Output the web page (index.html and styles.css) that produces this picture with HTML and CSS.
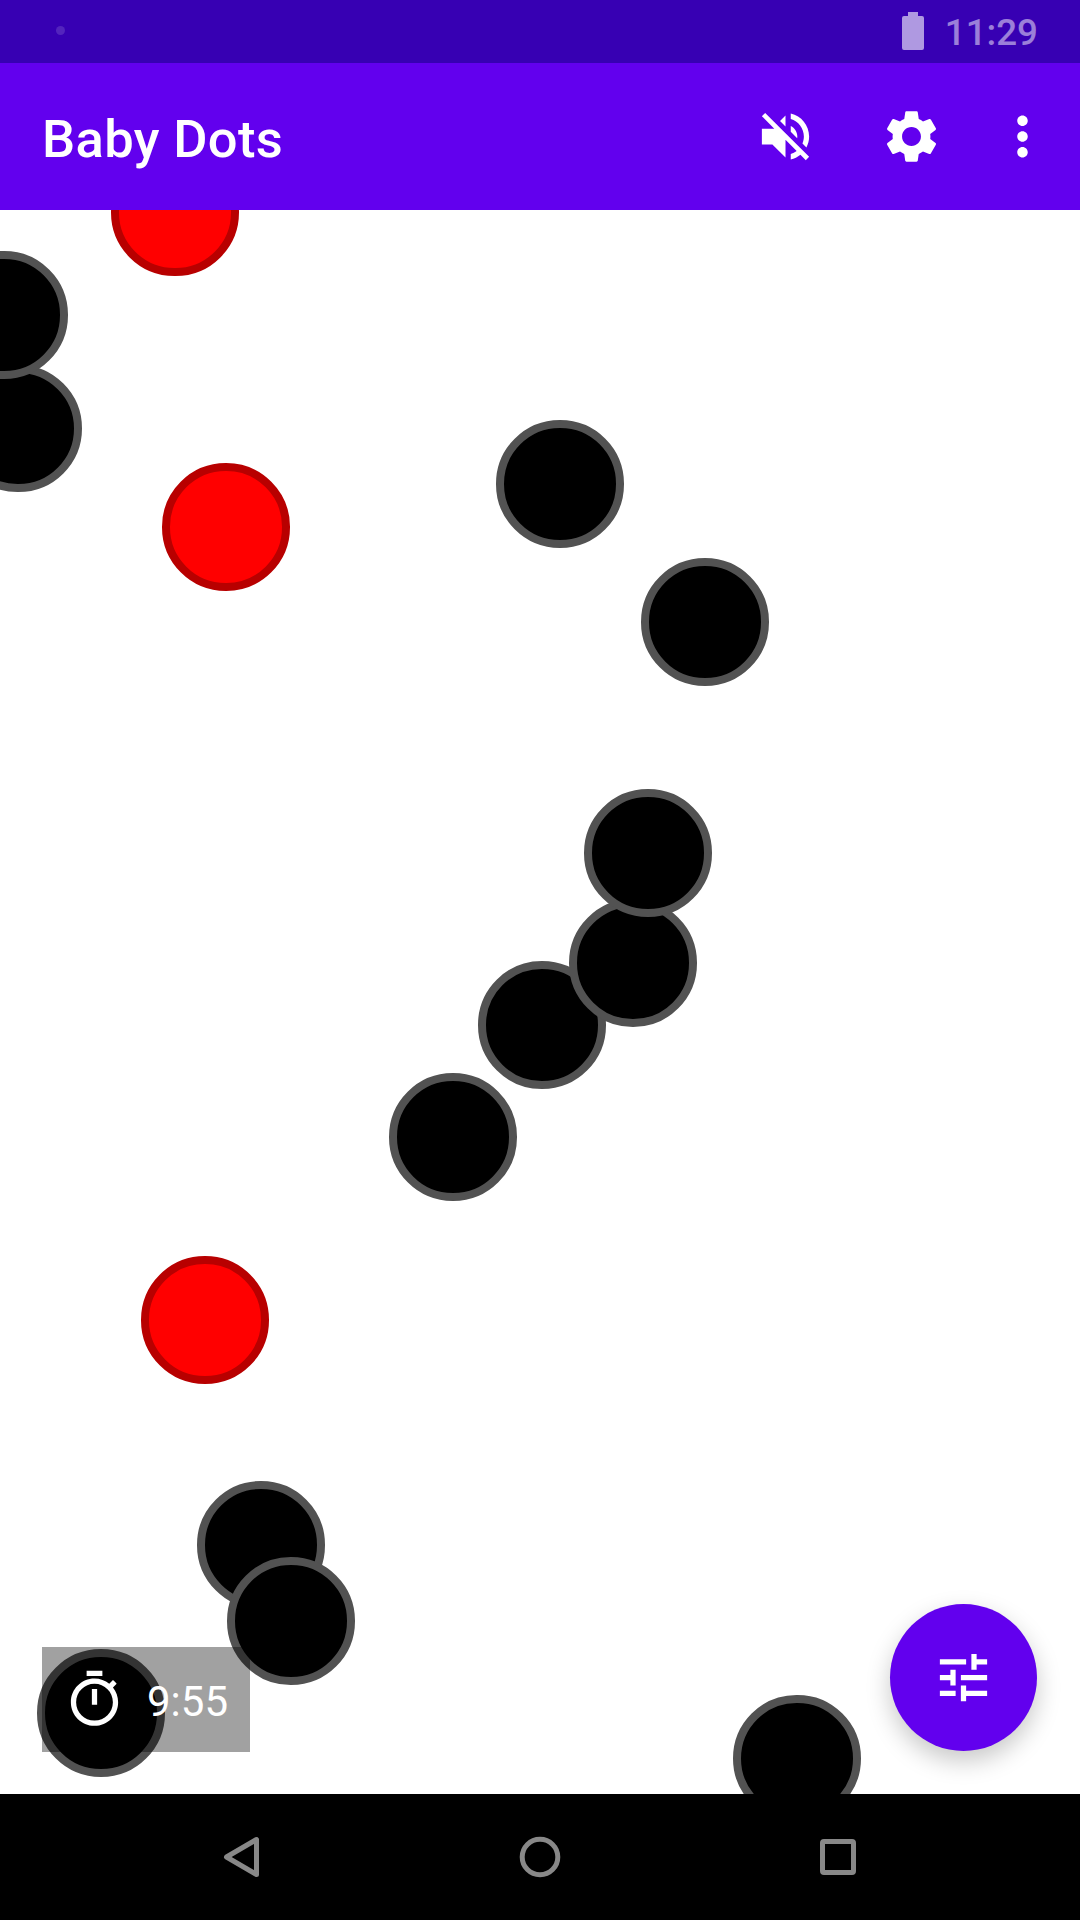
FILE: index.html
```html
<!DOCTYPE html>
<html lang="en">
<head>
<meta charset="utf-8">
<title>Baby Dots</title>
<link rel="stylesheet" href="styles.css">
</head>
<body>
<div class="screen">
  <div class="status-bar">
    <span class="notif-dot"></span>
    <div class="status-right">
      <svg class="battery" viewBox="0 0 22 38"><path d="M6 0h10v4h4a2 2 0 0 1 2 2v30a2 2 0 0 1-2 2H2a2 2 0 0 1-2-2V6a2 2 0 0 1 2-2h4z"/></svg>
      <span class="clock">11:29</span>
    </div>
  </div>
  <header class="app-bar">
    <h1 class="title">Baby Dots</h1>
    <div class="actions">
      <button class="action"><svg class="icon" viewBox="0 0 24 24"><path d="M16.5 12c0-1.77-1.02-3.29-2.5-4.03v2.21l2.45 2.45c.03-.2.05-.41.05-.63zm2.5 0c0 .94-.2 1.82-.54 2.64l1.51 1.51C20.63 14.91 21 13.5 21 12c0-4.28-2.99-7.86-7-8.77v2.06c2.89.86 5 3.54 5 6.71zM4.27 3L3 4.27 7.73 9H3v6h4l5 5v-6.73l4.25 4.25c-.67.52-1.42.93-2.25 1.18v2.06c1.38-.31 2.63-.95 3.69-1.81L19.73 21 21 19.73l-9-9L4.27 3zM12 4L9.91 6.09 12 8.18V4z"/></svg></button>
      <button class="action"><svg class="icon" viewBox="0 0 24 24"><path d="M19.14 12.94c.04-.3.06-.61.06-.94 0-.32-.02-.64-.07-.94l2.03-1.58c.18-.14.23-.41.12-.61l-1.92-3.32c-.12-.22-.37-.29-.59-.22l-2.39.96c-.5-.38-1.03-.7-1.62-.94l-.36-2.54c-.04-.24-.24-.41-.48-.41h-3.84c-.24 0-.43.17-.47.41l-.36 2.54c-.59.24-1.13.57-1.62.94l-2.39-.96c-.22-.08-.47 0-.59.22L2.74 8.87c-.12.21-.08.47.12.61l2.03 1.58c-.05.3-.09.63-.09.94s.02.64.07.94l-2.03 1.58c-.18.14-.23.41-.12.61l1.92 3.32c.12.22.37.29.59.22l2.39-.96c.5.38 1.03.7 1.62.94l.36 2.54c.05.24.24.41.48.41h3.84c.24 0 .44-.17.47-.41l.36-2.54c.59-.24 1.13-.56 1.62-.94l2.39.96c.22.08.47 0 .59-.22l1.92-3.32c.12-.22.07-.47-.12-.61l-2.01-1.58zM12 15.6c-1.98 0-3.6-1.62-3.6-3.6s1.62-3.6 3.6-3.6 3.6 1.62 3.6 3.6-1.62 3.6-3.6 3.6z"/></svg></button>
      <button class="action action-overflow"><svg class="icon" viewBox="0 0 24 24"><path d="M12 8c1.1 0 2-.9 2-2s-.9-2-2-2-2 .9-2 2 .9 2 2 2zm0 2c-1.1 0-2 .9-2 2s.9 2 2 2 2-.9 2-2-.9-2-2-2zm0 6c-1.1 0-2 .9-2 2s.9 2 2 2 2-.9 2-2-.9-2-2-2z"/></svg></button>
    </div>
  </header>
  <main class="canvas">
    <span class="dot dot-red" style="left:111px;top:-61.5px"></span>
    <span class="dot dot-black" style="left:-46px;top:154.500px"></span>
    <span class="dot dot-black" style="left:-60px;top:41px"></span>
    <span class="dot dot-red" style="left:162px;top:253px"></span>
    <span class="dot dot-black" style="left:496px;top:210px"></span>
    <span class="dot dot-black" style="left:641px;top:348px"></span>
    <span class="dot dot-black" style="left:478px;top:751px"></span>
    <span class="dot dot-black" style="left:569px;top:689px"></span>
    <span class="dot dot-black" style="left:584px;top:579px"></span>
    <span class="dot dot-black" style="left:389px;top:863px"></span>
    <span class="dot dot-red" style="left:141px;top:1046px"></span>
    <span class="dot dot-black" style="left:197px;top:1271px"></span>
    <span class="dot dot-black" style="left:227px;top:1347px"></span>
    <span class="dot dot-black" style="left:37px;top:1439px"></span>
    <span class="dot dot-black" style="left:733px;top:1484.500px"></span>
    <div class="timer">
      <svg class="icon" viewBox="0 0 24 24"><path d="M15 1H9v2h6V1zm-4 13h2V8h-2v6zm8.03-6.61l1.42-1.42c-.43-.51-.9-.99-1.41-1.41l-1.42 1.42C16.07 4.74 14.12 4 12 4c-4.97 0-9 4.03-9 9s4.02 9 9 9 9-4.03 9-9c0-2.12-.74-4.07-1.97-5.61zM12 20c-3.87 0-7-3.13-7-7s3.13-7 7-7 7 3.13 7 7-3.13 7-7 7z"/></svg>
      <span class="timer-text">9:55</span>
    </div>
    <button class="fab"><svg class="icon" viewBox="0 0 24 24"><path d="M3 17v2h6v-2H3zM3 5v2h10V5H3zm10 16v-2h8v-2h-8v-2h-2v6h2zM7 9v2H3v2h4v2h2V9H7zm14 4v-2H11v2h10zm-6-4h2V7h4V5h-4V3h-2v6z"/></svg></button>
  </main>
  <nav class="nav-bar">
    <div class="nav-item"><svg class="nav-icon" viewBox="0 0 44 44"><path d="M6.5 22 36.500 4.500v35z"/></svg></div>
    <div class="nav-item"><svg class="nav-icon" viewBox="0 0 44 44"><circle cx="22" cy="22" r="17.800"/></svg></div>
    <div class="nav-item"><svg class="nav-icon" viewBox="0 0 44 44"><rect x="6.5" y="6.5" width="31" height="31" rx="1.5"/></svg></div>
  </nav>
</div>
</body>
</html>
```
FILE: styles.css
```css
* { box-sizing: border-box; }
html, body { margin: 0; padding: 0; }
body { font-family: Roboto, "Noto Sans", sans-serif; background: #fff; }

.screen {
  width: 1080px;
  height: 1920px;
  display: flex;
  flex-direction: column;
  overflow: hidden;
}

.status-bar {
  height: 63px;
  flex: none;
  background: #3700b3;
  display: flex;
  align-items: center;
  justify-content: space-between;
  padding: 0 42px 0 56px;
}
.notif-dot {
  width: 9px;
  height: 9px;
  border-radius: 50%;
  background: rgba(255, 255, 255, .14);
  margin-top: -3px;
}
.status-right { display: flex; align-items: center; gap: 21px; }
.battery { width: 22px; height: 38px; fill: rgba(255, 255, 255, .6); margin-top: -1px; }
.clock {
  font-size: 36.75px;
  font-weight: 500;
  line-height: 1;
  margin-top: 4px;
  color: rgba(255, 255, 255, .5);
}

.app-bar {
  height: 147px;
  flex: none;
  background: #6200ee;
  display: flex;
  align-items: center;
  justify-content: space-between;
  padding: 0 10px 0 42px;
  position: relative;
  z-index: 2;
}
.title {
  margin: 6px 0 0;
  font-size: 52.5px;
  font-weight: 500;
  line-height: 1;
  letter-spacing: .35px;
  color: #fff;
}
.actions { display: flex; align-items: center; }
.action {
  width: 126px;
  height: 126px;
  padding: 0;
  border: 0;
  background: none;
  display: flex;
  align-items: center;
  justify-content: center;
}
.action-overflow { width: 96px; }
.icon { width: 63px; height: 63px; fill: #fff; flex: none; display: block; }

.canvas {
  flex: 1;
  position: relative;
  overflow: hidden;
  background: #fff;
}
.dot {
  position: absolute;
  width: 127.5px;
  height: 127.5px;
  border-radius: 50%;
  border: 8px solid;
}
.dot-black { background: #000; border-color: #525252; }
.dot-red { background: #f00; border-color: #b80000; }

.timer {
  position: absolute;
  left: 42px;
  bottom: 42px;
  display: flex;
  align-items: center;
  gap: 21px;
  padding: 21px 22px 21px 21px;
  background: rgba(0, 0, 0, .37);
}
.timer-text {
  font-size: 42px;
  line-height: 1;
  font-weight: 400;
  margin-top: 5px;
  color: #fff;
}

.fab {
  position: absolute;
  right: 43px;
  bottom: 43px;
  width: 147px;
  height: 147px;
  padding: 0;
  border: 0;
  border-radius: 50%;
  background: #6200ee;
  display: flex;
  align-items: center;
  justify-content: center;
  box-shadow: 0 10px 24px rgba(0, 0, 0, .22);
}

.nav-bar {
  height: 126px;
  flex: none;
  background: #000;
  display: flex;
  align-items: center;
  justify-content: center;
}
.nav-item {
  width: 298px;
  display: flex;
  justify-content: center;
}
.nav-icon {
  width: 44px;
  height: 44px;
  fill: none;
  stroke: #888;
  stroke-width: 5;
  stroke-linejoin: round;
}
```
